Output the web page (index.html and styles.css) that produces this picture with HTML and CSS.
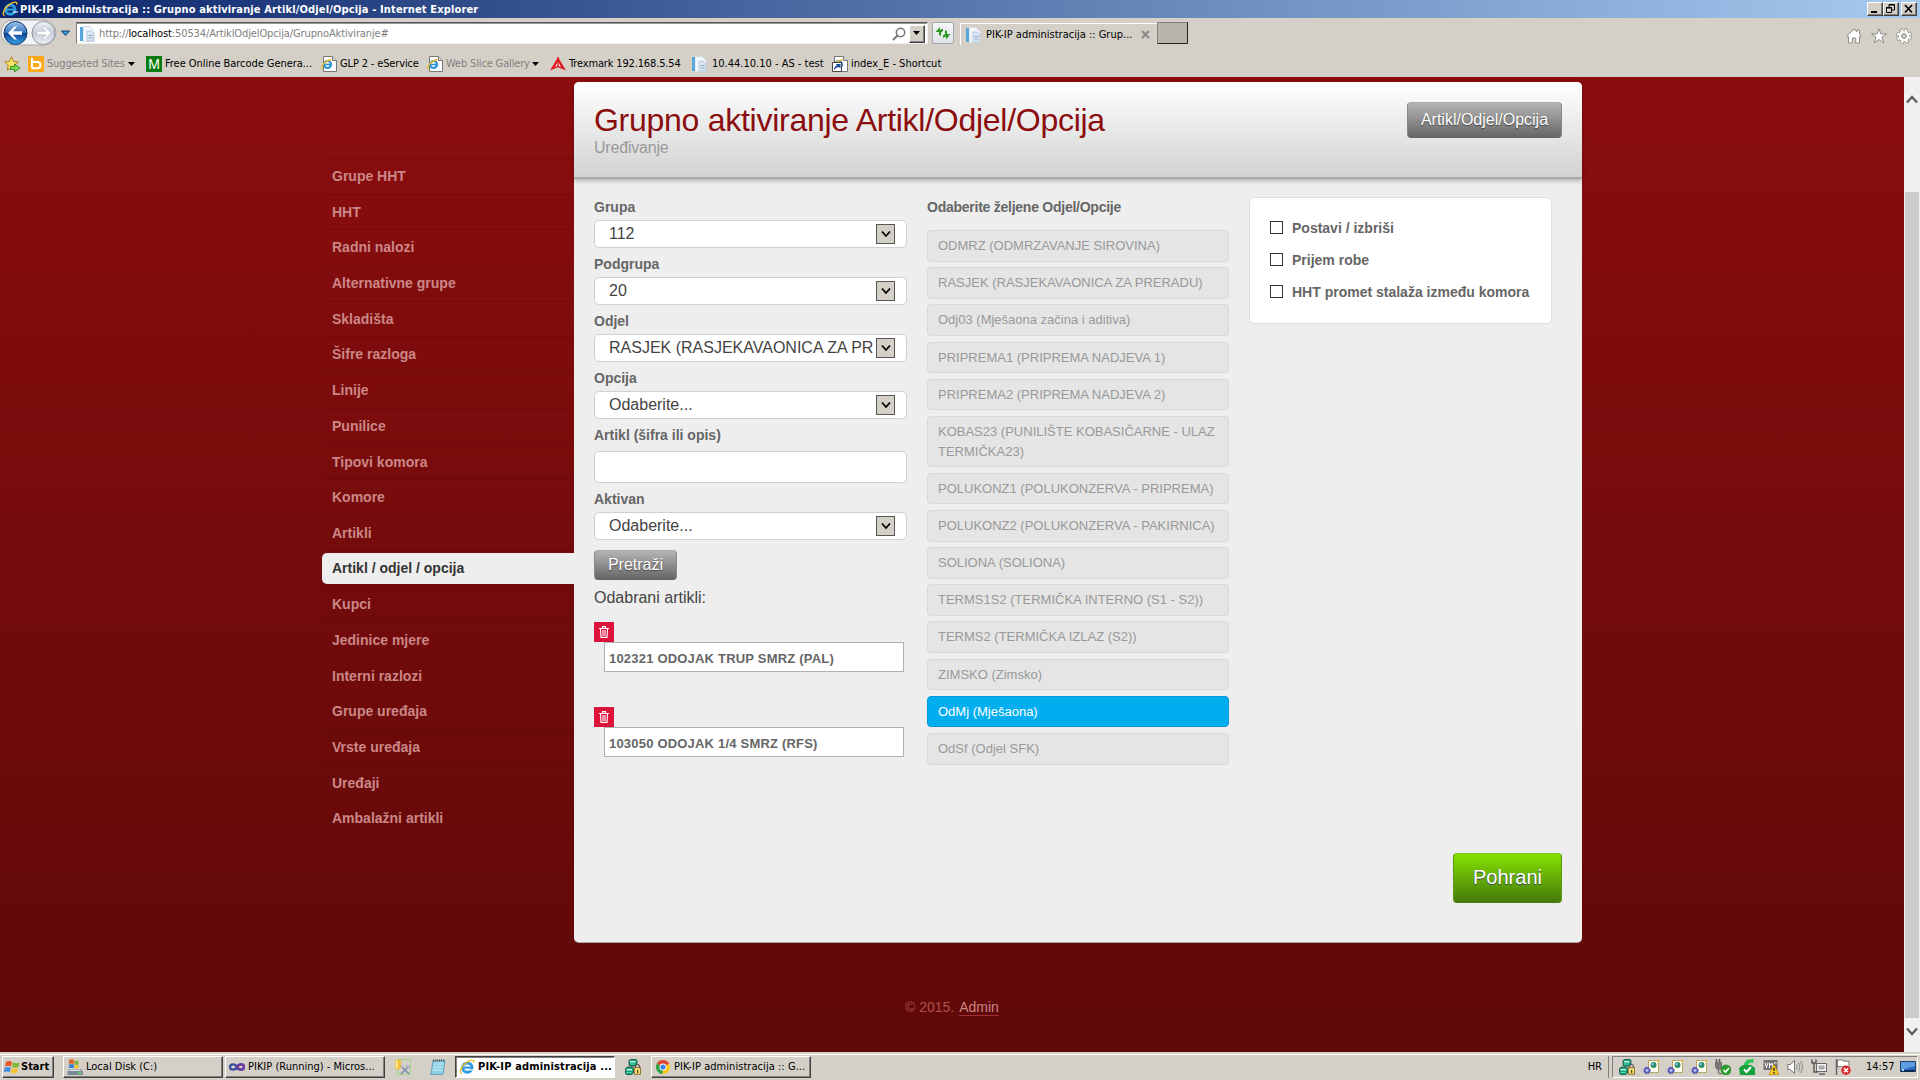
FILE: index.html
```html
<!DOCTYPE html>
<html lang="hr">
<head>
<meta charset="utf-8">
<title>PIK-IP administracija :: Grupno aktiviranje Artikl/Odjel/Opcija</title>
<link rel="stylesheet" href="styles.css">
</head>
<body>
<svg class="defs" width="0" height="0">
  <defs>
    <linearGradient id="g-back" x1="0" y1="0" x2="0" y2="1"><stop offset="0" stop-color="#9cc4ea"/><stop offset=".48" stop-color="#3a78c0"/><stop offset=".52" stop-color="#0d4596"/><stop offset="1" stop-color="#38a4e8"/></linearGradient>
    <linearGradient id="g-fwd" x1="0" y1="0" x2="0" y2="1"><stop offset="0" stop-color="#eef2f6"/><stop offset=".5" stop-color="#c4cdd8"/><stop offset="1" stop-color="#edf1f5"/></linearGradient>
    <symbol id="ie" viewBox="0 0 16 16"><circle cx="8.3" cy="8.6" r="4.7" fill="none" stroke="#2e9be0" stroke-width="3"/><path d="M4 8.6h9.5" stroke="#2e9be0" stroke-width="2.2"/><path d="M11 10h5v2h-5z" fill="#fff" opacity=".55"/><path d="M2.5 14.8C-.5 13 2.8 6.500 7.500 3.400S15.500 .3 14.600 3.500" fill="none" stroke="#f3bf2c" stroke-width="1.400"/></symbol>
    <symbol id="page" viewBox="0 0 16 16"><path d="M3 .5h7l4 4v11H3z" fill="#f3f7fc" stroke="#d3dce8"/><path d="M0 1h3v14H0z" fill="#58a7dc"/><path d="M7 5h4l3 3v7H7z" fill="#dbe5f1" stroke="#b9c9dc"/><path d="M8.500 9.500h4M8.500 12h4" stroke="#8fa9c6"/></symbol>
    <symbol id="iepage" viewBox="0 0 16 16"><path d="M2.500 .5h9l4 4v11h-13z" fill="#fff" stroke="#777"/><path d="M11.500 .5v4h4" fill="#ddd" stroke="#777"/><circle cx="6.500" cy="8.500" r="3.500" fill="none" stroke="#2b93d6" stroke-width="2.200"/><path d="M4 8.500h6" stroke="#2b93d6" stroke-width="1.600"/><path d="M1.500 13C-.5 11 3 5 10.500 3.500" fill="none" stroke="#f0b92b" stroke-width="1.300"/></symbol>
    <symbol id="servers" viewBox="0 0 16 16"><path d="M4 1.500l2-1h5l1 1v4l-2 1.500H5L4 6z" fill="#17a07c" stroke="#17463f" stroke-width=".8"/><path d="M.5 9.500l2-1.500h5l1 1.500v4.500l-2 1.500H1.500l-1-1z" fill="#17a07c" stroke="#17463f" stroke-width=".8"/><path d="M5 2h5.500v1.500H5zM1.500 10h5.500v1.500H1.500z" fill="#b2fbe0"/><path d="M5 5h5M1.500 13.500h5" stroke="#4be0ae"/><path d="M10.500 9V7.500a2 2 0 0 1 4 0V9" fill="none" stroke="#555" stroke-width="1.200"/><path d="M9.200 8.700h6.400v6.500H9.200z" fill="#f7dd7a" stroke="#6b5310" stroke-width=".8"/><path d="M12 11h1.200v3H12z" fill="#5d4607"/></symbol>
    <symbol id="gearpage" viewBox="0 0 16 16"><path d="M5.500 1.500h10v12h-10z" fill="#fffef0" stroke="#b9a76a"/><circle cx="10.500" cy="6" r="3" fill="#2d8f68"/><circle cx="9.700" cy="5.300" r="1.300" fill="#7cb8e8"/><path d="M13 1h3v3z" fill="#efaa22"/><circle cx="4" cy="11.500" r="2.700" fill="#8b90dc" stroke="#4a4fae" stroke-width="1.900" stroke-dasharray="1.600 .5"/><circle cx="4" cy="11.500" r="1" fill="#c9cdf8"/></symbol>
    <symbol id="trash" viewBox="0 0 10 12"><path d="M0 2.500h10M3.500 2V.6h3V2" fill="none" stroke="#fff" stroke-width="1.100"/><path d="M1.500 3l.5 8.400h6L8.500 3M4 4v6M6 4v6" fill="none" stroke="#fff" stroke-width="1.100"/></symbol>
    <symbol id="chev" viewBox="0 0 10 8"><path d="M1 1.500l4 4.500 4-4.500" fill="none" stroke="#000" stroke-width="1.800"/></symbol>
  </defs>
</svg>

<header class="titlebar">
  <svg width="16" height="16"><use href="#ie"/></svg>
  <span class="titlebar-text">PIK-IP administracija :: Grupno aktiviranje Artikl/Odjel/Opcija - Internet Explorer</span>
  <div class="winbtns">
    <span class="winbtn"><svg width="12" height="10"><path d="M2 8h6" stroke="#000" stroke-width="2"/></svg></span>
    <span class="winbtn"><svg width="12" height="10"><path d="M4 3V.5h5.500V6H7M4 1h6" fill="none" stroke="#000"/><path d="M1.500 3.500h5v5h-5zM1 4h6" fill="none" stroke="#000"/></svg></span>
    <span class="winbtn winbtn-close"><svg width="12" height="10"><path d="M2 1l7 7.500M9 1L2 8.500" stroke="#000" stroke-width="1.700"/></svg></span>
  </div>
</header>

<div class="navrow">
  <svg class="navbtns" width="76" height="30">
    <rect x="1" y="2" width="55" height="25" rx="12.500" fill="#f2f3f4" stroke="#aaa"/>
    <circle cx="15.500" cy="15" r="11.500" fill="url(#g-back)" stroke="#12376e"/>
    <path d="M8 15l6.500-6.500h2.500L13 13.300h9v3.400h-9l4 4.800h-2.500z" fill="#fff"/>
    <circle cx="43.500" cy="15" r="11.500" fill="url(#g-fwd)" stroke="#8e959e"/>
    <path d="M51 15l-6.500-6.500h-2.500l4 4.800h-9v3.400h9l-4 4.800h2.500z" fill="#fff" stroke="#b8bfc8" stroke-width=".6"/>
    <path d="M61.500 13h8l-4 4.500z" fill="#3aa3d8" stroke="#123c66"/>
  </svg>
  <div class="address">
    <svg width="16" height="16"><use href="#page"/></svg>
    <span class="url">http://<b>localhost</b>:50534/ArtiklOdjelOpcija/GrupnoAktiviranje#</span>
    <svg class="search" width="14" height="14"><circle cx="8.500" cy="5.500" r="4.200" fill="none" stroke="#777" stroke-width="1.500"/><path d="M5.500 8.500L1 13" stroke="#777" stroke-width="2"/></svg>
    <span class="dropbtn"><svg width="8" height="5"><path d="M0 0h7L3.500 4z"/></svg></span>
  </div>
  <span class="refresh"><svg width="16" height="14"><path d="M.5 6L5 1v3l3-1.500V5L6 6.500v3H4V6z" fill="#2f9a24"/><path d="M15.500 8L11 13.500v-3L8 12V9.500L10 8V4.500h2V8z" fill="#2f9a24"/></svg></span>
  <div class="tab">
    <svg width="16" height="16"><use href="#page"/></svg>
    <span class="tab-text">PIK-IP administracija :: Grup...</span>
    <svg width="9" height="9"><path d="M1 1l7 7M8 1L1 8" stroke="#888" stroke-width="2"/></svg>
  </div>
  <span class="newtab"></span>
  <div class="tools">
    <svg width="16" height="16"><path d="M.7 8L8 1l3 2.800V2h2.500v4L15.300 8l-1 1.200-.8-.7V15H9.700v-5H6.300v5H2.500V8.500l-.8.700z" fill="#fff" stroke="#8a8a86"/></svg>
    <svg width="16" height="16"><path d="M8 .8l1.900 5.100h5.500l-4.400 3.300 1.700 5.600L8 11.500l-4.700 3.300L5 9.200.6 5.900h5.500z" fill="#fff" stroke="#8a8a86"/></svg>
    <svg width="16" height="16"><circle cx="8" cy="8" r="6.300" fill="none" stroke="#8a8a86" stroke-width="3.300" stroke-dasharray="3.100 1.850"/><circle cx="8" cy="8" r="5" fill="none" stroke="#8a8a86" stroke-width="2"/><circle cx="8" cy="8" r="6" fill="none" stroke="#fff" stroke-width="2.400" stroke-dasharray="2.100 2.612" stroke-dashoffset="-.5"/><circle cx="8" cy="8" r="4" fill="none" stroke="#fff" stroke-width="2.600"/><circle cx="8" cy="8" r="2.300" fill="#d4d0c8" stroke="#8a8a86"/></svg>
  </div>
</div>

<div class="favrow">
  <svg class="fav-star" width="17" height="16"><path d="M7.500 .8l2 4.700 5 .3-3.800 3.300 1.200 5L7.500 11.500l-4.300 2.600 1.100-5L.6 5.800l4.900-.3z" fill="#fbe36a" stroke="#b5841a"/><path d="M6.500 10.500h4V8l5.500 4-5.500 4v-2.500h-4z" fill="#7ed957" stroke="#1c7f17" stroke-width=".8"/></svg>
  <span class="fav fav-sites"><svg width="16" height="16"><path d="M0 0h16v16H0z" fill="#fba919"/><path d="M4 2v10.500" stroke="#fff" stroke-width="2"/><path d="M5 6h4q3.500 0 3.500 3.200T9 12.300H4" fill="none" stroke="#fff" stroke-width="2"/></svg><i class="dim">Suggested Sites</i><svg class="caret" width="7" height="4"><path d="M0 0h7L3.500 4z"/></svg></span>
  <span class="fav fav-barcode"><b class="m-icon">M</b><i>Free Online Barcode Genera...</i></span>
  <span class="fav fav-glp"><svg width="16" height="16"><use href="#iepage"/></svg><i>GLP 2 - eService</i></span>
  <span class="fav fav-slice"><svg width="16" height="16"><use href="#iepage"/></svg><i class="dim">Web Slice Gallery</i><svg class="caret" width="7" height="4"><path d="M0 0h7L3.500 4z"/></svg></span>
  <span class="fav fav-trex"><svg width="16" height="16"><path d="M8 1l8 13.500-8-3.200-8 3.200z" fill="#e01b22"/><path d="M8 5l2.800 6L8 9.500 5.200 11z" fill="#fff"/><path d="M8 1v9" stroke="#e01b22" stroke-width="1.500"/></svg><i>Trexmark 192.168.5.54</i></span>
  <span class="fav fav-as"><svg width="16" height="16"><use href="#page"/></svg><i>10.44.10.10 - AS - test</i></span>
  <span class="fav fav-index"><svg width="16" height="16"><use href="#iepage"/><path d="M.5 6.500h9v9h-9z" fill="#fff" stroke="#444"/><path d="M2 14q0-4 3-4.500L4 8h4.500v4.500L7 11q-3 0-5 3z" fill="#174aa0"/></svg><i>index_E - Shortcut</i></span>
</div>

<div class="viewport">
  <nav class="sidebar">
    <div class="nav-item"><a>Grupe HHT</a></div>
    <div class="nav-item"><a>HHT</a></div>
    <div class="nav-item"><a>Radni nalozi</a></div>
    <div class="nav-item"><a>Alternativne grupe</a></div>
    <div class="nav-item"><a>Skladišta</a></div>
    <div class="nav-item"><a>Šifre razloga</a></div>
    <div class="nav-item"><a>Linije</a></div>
    <div class="nav-item"><a>Punilice</a></div>
    <div class="nav-item"><a>Tipovi komora</a></div>
    <div class="nav-item"><a>Komore</a></div>
    <div class="nav-item"><a>Artikli</a></div>
    <div class="nav-item"><a class="active">Artikl / odjel / opcija</a></div>
    <div class="nav-item"><a>Kupci</a></div>
    <div class="nav-item"><a>Jedinice mjere</a></div>
    <div class="nav-item"><a>Interni razlozi</a></div>
    <div class="nav-item"><a>Grupe uređaja</a></div>
    <div class="nav-item"><a>Vrste uređaja</a></div>
    <div class="nav-item"><a>Uređaji</a></div>
    <div class="nav-item nav-last"><a>Ambalažni artikli</a></div>
  </nav>

  <div class="content">
    <main class="panel">
      <div class="panel-head">
        <div>
          <h1>Grupno aktiviranje Artikl/Odjel/Opcija</h1>
          <p class="subtitle">Uređivanje</p>
        </div>
        <a class="btn btn-head">Artikl/Odjel/Opcija</a>
      </div>
      <div class="panel-body">
        <section class="filters">
          <label>Grupa</label>
          <div class="select"><span>112</span><b class="arrow"><svg width="10" height="8"><use href="#chev"/></svg></b></div>
          <label>Podgrupa</label>
          <div class="select"><span>20</span><b class="arrow"><svg width="10" height="8"><use href="#chev"/></svg></b></div>
          <label>Odjel</label>
          <div class="select"><span>RASJEK (RASJEKAVAONICA ZA PR</span><b class="arrow"><svg width="10" height="8"><use href="#chev"/></svg></b></div>
          <label>Opcija</label>
          <div class="select"><span>Odaberite...</span><b class="arrow"><svg width="10" height="8"><use href="#chev"/></svg></b></div>
          <label>Artikl (šifra ili opis)</label>
          <div class="input"></div>
          <label>Aktivan</label>
          <div class="select"><span>Odaberite...</span><b class="arrow"><svg width="10" height="8"><use href="#chev"/></svg></b></div>
          <a class="btn btn-search">Pretraži</a>
          <p class="chosen">Odabrani artikli:</p>
          <div class="article"><span class="del"><svg width="10" height="12"><use href="#trash"/></svg></span><div class="article-name">102321 ODOJAK TRUP SMRZ (PAL)</div></div>
          <div class="article"><span class="del"><svg width="10" height="12"><use href="#trash"/></svg></span><div class="article-name">103050 ODOJAK 1/4 SMRZ (RFS)</div></div>
        </section>
        <section class="options">
          <label>Odaberite željene Odjel/Opcije</label>
          <div class="option-list">
            <div class="option">ODMRZ (ODMRZAVANJE SIROVINA)</div>
            <div class="option">RASJEK (RASJEKAVAONICA ZA PRERADU)</div>
            <div class="option">Odj03 (Mješaona začina i aditiva)</div>
            <div class="option">PRIPREMA1 (PRIPREMA NADJEVA 1)</div>
            <div class="option">PRIPREMA2 (PRIPREMA NADJEVA 2)</div>
            <div class="option">KOBAS23 (PUNILIŠTE KOBASIČARNE - ULAZ<br>TERMIČKA23)</div>
            <div class="option">POLUKONZ1 (POLUKONZERVA - PRIPREMA)</div>
            <div class="option">POLUKONZ2 (POLUKONZERVA - PAKIRNICA)</div>
            <div class="option">SOLIONA (SOLIONA)</div>
            <div class="option">TERMS1S2 (TERMIČKA INTERNO (S1 - S2))</div>
            <div class="option">TERMS2 (TERMIČKA IZLAZ (S2))</div>
            <div class="option">ZIMSKO (Zimsko)</div>
            <div class="option selected">OdMj (Mješaona)</div>
            <div class="option">OdSf (Odjel SFK)</div>
          </div>
        </section>
        <section class="actions">
          <div class="checks">
            <div class="check"><i></i>Postavi / izbriši</div>
            <div class="check"><i></i>Prijem robe</div>
            <div class="check"><i></i>HHT promet stalaža između komora</div>
          </div>
          <a class="btn-save">Pohrani</a>
        </section>
      </div>
    </main>
    <footer class="foot">© 2015. <a>Admin</a></footer>
  </div>

  <div class="scrollbar">
    <svg width="16" height="10"><path d="M3 8.500l5-5.500 5 5.500" fill="none" stroke="#606060" stroke-width="2.400"/></svg>
    <div class="thumb"></div>
    <svg width="16" height="10"><path d="M3 1.500L8 7l5-5.500" fill="none" stroke="#606060" stroke-width="2.400"/></svg>
  </div>
</div>

<div class="taskbar">
  <span class="task start"><svg width="16" height="16"><path d="M2 3q3-2 6 0L7 7.500q-3-1.500-6 0z" fill="#e8562a"/><path d="M9 3.300q3 1.700 6.500 0l-1 4.700q-3 1.500-6.500 0z" fill="#7cb936"/><path d="M.8 8.800q3-1.800 6 0l-1 4.500q-3-1.800-6 0z" fill="#3e8fdc"/><path d="M7.800 9q3 1.600 6.300 0l-1 4.500q-3.300 1.600-6.300 0z" fill="#f6c12c"/></svg>Start</span>
  <span class="task t-disk"><svg width="16" height="16"><path d="M2 1q3-1.500 5 0v4q-2-1-5 0z" fill="#e2632a"/><path d="M7.500 1.500q2 .8 4 0v4q-2 .8-4 0z" fill="#78b43a"/><path d="M2 5.500q3-1 5 0v3.500H2z" fill="#3c86d0"/><path d="M7.500 6q2 .6 4 0v3.500h-4z" fill="#f2c02f"/><path d="M2.500 10h11l2.500 3v3H.500v-3z" fill="#7c8994"/><path d="M3 10.500h10l1 1.500H2z" fill="#d7dee4"/><path d="M11 14h3" stroke="#5f5" stroke-width="1.200"/></svg>Local Disk (C:)</span>
  <span class="task t-vs"><svg width="16" height="16"><path d="M8 8C6 4.500 1 4.500 1 8s5 3.500 7 0 7-3.500 7 0-5 3.500-7 0" fill="none" stroke="#3c51a0" stroke-width="2.400"/><path d="M8 8c2-3.500 7-3.500 7 0s-5 3.500-7 0" fill="none" stroke="#6c3a9c" stroke-width="2.400"/></svg>PIKIP (Running) - Micros...</span>
  <svg class="ql-db" width="16" height="16"><path d="M2.500 .5h13v15h-13z" fill="none" stroke="#6ddf3c" stroke-dasharray="1 1"/><path d="M0 1.500q3-2 6 0v8q-3 2-6 0z" fill="#f2c141"/><path d="M1 2h1.500v7H1z" fill="#fff3b8"/><path d="M6 15l8-8M7 8l7 7" stroke="#7c8ba8" stroke-width="1.600"/><path d="M11 6.500l4 2.500M6 6.500l2 2.500" stroke="#a9b6cc" stroke-width="2.500"/></svg>
  <svg class="ql-note" width="16" height="16"><path d="M3 1.500h12L13 15.500H.800z" fill="#8dd0e4" stroke="#5b93a8" stroke-width=".8"/><path d="M3.500 5h10M3 8h10M2.500 11h10" stroke="#c9edf6"/><path d="M3 1.500h12" stroke="#555" stroke-dasharray="1 1" stroke-width="2"/></svg>
  <span class="task t-ie"><svg width="16" height="16"><use href="#ie"/></svg>PIK-IP administracija ...</span>
  <svg class="ql-srv" width="16" height="16"><use href="#servers"/></svg>
  <span class="task t-chrome"><svg width="16" height="16"><circle cx="8" cy="8" r="7" fill="#fbc817"/><path d="M8 8L1.900 4.500A7 7 0 0 1 14.100 4.500z" fill="#dd4436"/><path d="M8 8L1.900 4.500A7 7 0 0 0 7.500 15z" fill="#2ea24c"/><path d="M8 4.500h6.300L8 8z" fill="#dd4436"/><circle cx="8" cy="8" r="3.500" fill="#fff"/><circle cx="8" cy="8" r="2.600" fill="#3d7fe0"/></svg>PIK-IP administracija :: G...</span>
  <span class="lang">HR</span>
  <div class="tray">
    <svg width="16" height="16"><use href="#servers"/></svg>
    <svg width="16" height="16"><use href="#gearpage"/></svg>
    <svg width="16" height="16"><use href="#gearpage"/></svg>
    <svg width="16" height="16"><use href="#gearpage"/></svg>
    <svg width="16" height="16"><path d="M1.500 0v3M4.500 0v3" stroke="#555" stroke-width="1.500"/><path d="M0 3h7v5q-1 3-3.500 3T0 8z" fill="#777"/><path d="M3.500 10v4q2 1.500 4 0" fill="none" stroke="#777" stroke-width="1.500"/><circle cx="11" cy="11" r="5" fill="#2aa02a" stroke="#11701a" stroke-width=".6"/><path d="M8.500 11l2 2 3.500-4" fill="none" stroke="#fff" stroke-width="1.600"/></svg>
    <svg width="16" height="16"><path d="M0 9l4-3h8l4 3v7H1z" fill="#16a23b"/><path d="M5 6q1-6 6-5.500L15 0l-1 4q-4-1.500-5 2z" fill="#26c651"/><path d="M5 10.500L7.500 13 12 8" fill="none" stroke="#fff" stroke-width="2"/></svg>
    <svg width="16" height="16"><path d="M.5 1h14v10H.500z" fill="#727272"/><path d="M2 3.500l1.500 5L5 3.500M6.500 9V4l1.500 2 1.500-2v5M11 4h2.500" fill="none" stroke="#fff"/><path d="M11 5.500L16 15.500H6z" fill="#fcd01e" stroke="#b8860b" stroke-width=".7"/><path d="M11 9v3M11 13v1.500" stroke="#222" stroke-width="1.400"/></svg>
    <svg width="16" height="16"><path d="M.8 5.500h2.500L7.500 1.500v13l-4.200-4H.8z" fill="#fff" stroke="#777"/><path d="M9.500 5.500q1.500 2.500 0 5M11.500 3.500q3 4.500 0 9M13.500 2q4 6 0 12" fill="none" stroke="#888"/></svg>
    <svg width="16" height="16"><path d="M5.500 4.500h10v8h-10z" fill="#f4f4f0" stroke="#666"/><path d="M7.500 6.500h6v4h-6z" fill="#aaa"/><path d="M8 15h6" stroke="#666" stroke-width="1.500"/><path d="M1 .5v3.500h4V.500M3 4v9h4" fill="none" stroke="#555" stroke-width="1.400"/></svg>
    <svg width="16" height="16"><path d="M1.500 0v16" stroke="#666" stroke-width="1.500"/><path d="M2.500 1.500q3-1.500 5.500 0t6 .5v6.500q-3 1-6-.5t-5.500 0z" fill="#fff" stroke="#777"/><circle cx="11" cy="11.200" r="4.700" fill="#dc2a2a"/><path d="M9 9.200l4 4M13 9.200l-4 4" stroke="#fff" stroke-width="1.600"/></svg>
    <span class="clock">14:57</span>
    <svg width="16" height="12"><path d="M.5 .5h15v10H.500z" fill="#2b69bd" stroke="#1f4271"/><path d="M1 1h14v4L1 9z" fill="#5e9de0"/><path d="M1 10h14" stroke="#0d2a54" stroke-width="2"/><path d="M2 8h2v2H2z" fill="#9df"/></svg>
  </div>
</div>
</body>
</html>
```
FILE: styles.css
```css
* { box-sizing: border-box; }
body {
  margin: 0;
  width: 1920px;
  height: 1080px;
  overflow: hidden;
  display: flex;
  flex-direction: column;
  background: #d4d0c8;
  color: #000;
  font: 11px/14px "DejaVu Sans Condensed", "DejaVu Sans", sans-serif;
  white-space: nowrap;
}
svg { display: block; flex: none; }
.defs { position: absolute; }

/* Browser chrome */
.titlebar {
  height: 18px;
  flex: none;
  display: flex;
  align-items: center;
  padding: 0 3px 0 2px;
  background: linear-gradient(90deg, #0a246a, #a6caf0);
  color: #fff;
  font-weight: bold;
}
.titlebar-text { margin-left: 2px; padding-top: 1px; letter-spacing: .14px; }
.winbtns { margin-left: auto; display: flex; }
.winbtn {
  width: 16px;
  height: 14px;
  padding: 1px;
  background: #d4d0c8;
  border: 1px solid;
  border-color: #fff #404040 #404040 #fff;
  box-shadow: inset -1px -1px #808080;
}
.winbtn-close { margin-left: 2px; }

.navrow { height: 30px; flex: none; display: flex; align-items: flex-start; }
.navbtns { width: 76px; }
.address {
  width: 852px;
  height: 22px;
  margin-top: 4px;
  padding: 1px 2px 0 3px;
  display: flex;
  align-items: center;
  background: #fff;
  border: 1px solid;
  border-color: #555 #eee #eee #808080;
  box-shadow: inset 0 1px #999;
}
.url { margin-left: 3px; padding-top: 1px; color: #808080; letter-spacing: -.12px; }
.url b { font-weight: normal; color: #000; }
.search { margin-left: auto; }
.dropbtn {
  width: 16px;
  height: 18px;
  margin-left: 3px;
  display: flex;
  align-items: center;
  justify-content: center;
  background: #d4d0c8;
  border: 1px solid;
  border-color: #fff #404040 #404040 #fff;
  box-shadow: inset -1px -1px #808080;
}
.refresh {
  width: 22px;
  height: 22px;
  margin: 4px 0 0 4px;
  display: flex;
  align-items: center;
  justify-content: center;
  background: linear-gradient(#f4f5f7, #dfe3e8);
  border: 1px solid #a4a8ae;
  border-radius: 2px;
}
.tab {
  width: 197px;
  height: 22px;
  margin: 5px 0 0 6px;
  padding-left: 5px;
  display: flex;
  align-items: center;
  border-top: 1px solid #fff;
  border-left: 1px solid #fff;
}
.tab-text { width: 154px; margin: 0 1px 0 4px; letter-spacing: 0; }
.newtab {
  width: 31px;
  height: 22px;
  margin-top: 4px;
  background: #b8b4ac;
  border: 1px solid;
  border-color: #808080 #222 #222 #808080;
}
.tools { margin: 10px 8px 0 auto; display: flex; gap: 9px; }

.favrow { height: 29px; flex: none; display: flex; align-items: center; padding: 2px 0 0 4px; }
.fav-star { margin-right: 7px; }
.fav { display: flex; align-items: center; }
.fav i { font-style: normal; margin-left: 3px; letter-spacing: -.15px; }
.fav .dim { color: #808080; }
.caret { margin-left: auto; }
.fav-sites { width: 107px; margin-right: 11px; }
.fav-barcode { width: 175px; }
.fav-barcode i { letter-spacing: -.05px; }
.fav-glp { width: 106px; }
.fav-slice { width: 112px; margin-right: 11px; }
.fav-trex { width: 142px; }
.fav-as { width: 140px; }
.fav-as i { margin-left: 4px; letter-spacing: 0; }
.fav-index i { letter-spacing: 0; }
.m-icon {
  width: 16px;
  height: 16px;
  background: #0b7d0e;
  color: #fff;
  font: 14px/16px "Liberation Sans", Arial, sans-serif;
  text-align: center;
}

/* Page */
.viewport {
  height: 975px;
  flex: none;
  display: flex;
  padding-left: 322px;
  background: linear-gradient(#8b0d0e, #5e0908);
  font-family: "Liberation Sans", Arial, sans-serif;
}
.sidebar { width: 252px; padding-top: 81px; }
.nav-item {
  height: 35.7px;
  padding-top: 1px;
  border-top: 1px solid rgba(60, 0, 0, .2);
}
.nav-last { border-bottom: 1px solid rgba(60, 0, 0, .2); }
.nav-item a {
  display: block;
  height: 31px;
  padding-left: 10px;
  border-radius: 5px 0 0 5px;
  color: #cb8787;
  font-size: 14px;
  font-weight: bold;
  line-height: 33px;
}
.nav-item .active { background: #eee; color: #333; line-height: 31px; }

.content { width: 1008px; padding-top: 5px; }
.panel {
  height: 861px;
  background: #eee;
  border-radius: 5px;
  border-bottom: 1px solid #aaa;
}
.panel-head {
  height: 97px;
  padding: 20px 20px 0;
  display: flex;
  justify-content: space-between;
  align-items: flex-start;
  border-radius: 5px 5px 0 0;
  border-bottom: 2px solid #aaa;
  background: linear-gradient(#fff, #d2d2d2);
  box-shadow: 0 2px 4px rgba(0, 0, 0, .25);
}
h1 { margin: 0; color: #8b0d0e; font-size: 32px; font-weight: normal; line-height: 36px; letter-spacing: -.27px; }
.subtitle { margin: 0; color: #999; font-size: 16px; line-height: 20px; letter-spacing: -.2px; }
.btn {
  display: block;
  border: 1px solid;
  border-color: #aaa #888 #666 #888;
  border-radius: 4px;
  background: linear-gradient(#b5b5b5, #666);
  color: #fff;
  font-size: 16px;
  text-align: center;
  text-shadow: 0 1px 1px #444;
}
.btn-head { width: 155px; height: 36px; line-height: 34px; }
.panel-body { height: 763px; padding: 18px 20px 0; display: flex; }
label { display: block; color: #666; font-size: 14px; font-weight: bold; line-height: 20px; }

.filters { width: 313px; margin-right: 20px; }
.select {
  height: 28px;
  margin: 3px 0 6px;
  padding: 0 11px 0 14px;
  display: flex;
  align-items: center;
  justify-content: space-between;
  background: #fff;
  border: 1px solid #d0d0d0;
  border-radius: 5px;
  color: #444;
  font-size: 16px;
}
.select span { width: 267px; line-height: 24px; }
.arrow {
  width: 19px;
  height: 20px;
  flex: none;
  display: flex;
  align-items: center;
  justify-content: center;
  background: #d4d0c8;
  border: 1px solid #555;
  position: relative;
}
.input { height: 32px; margin: 6px 0; background: #fff; border: 1px solid #d0d0d0; border-radius: 5px; }
.btn-search { width: 83px; height: 30px; margin-top: 10px; line-height: 28px; }
.chosen { margin: 8px 0 14px; color: #444; font-size: 16px; line-height: 20px; }
.article { height: 85px; }
.del {
  width: 20px;
  height: 20px;
  display: flex;
  align-items: center;
  justify-content: center;
  background: #dc143c;
}
.article-name {
  width: 300px;
  height: 30px;
  margin-left: 10px;
  padding-left: 4px;
  background: #fff;
  border: 1px solid #b0b0b0;
  color: #666;
  font-size: 13px;
  font-weight: bold;
  line-height: 31px;
  letter-spacing: .2px;
}

.options { width: 302px; margin-right: 20px; }
.options label { letter-spacing: -.25px; }
.option-list { margin-top: 13px; display: flex; flex-direction: column; gap: 5.6px; }
.option {
  padding: 5px 10px;
  background: #e5e5e5;
  border: 1px solid #d9d9d9;
  border-radius: 4px;
  color: #999;
  font-size: 13px;
  line-height: 19.6px;
}
.selected { background: #00adef; border-color: #0596d4; color: #fff; }

.actions { flex: 1; display: flex; flex-direction: column; }
.checks {
  width: 303px;
  height: 127px;
  padding: 20px 0 0 20px;
  background: #fff;
  border: 1px solid #e0e0e0;
  border-radius: 5px;
}
.check { height: 32px; display: flex; align-items: center; padding-bottom: 12px; color: #666; font-size: 14px; font-weight: bold; line-height: 20px; }
.check i { width: 13px; height: 13px; margin: 0 9px 1px 0; background: #fff; border: 1px solid #333; }
.btn-save {
  width: 109px;
  height: 50px;
  margin: 529px 0 0 auto;
  border: 1px solid;
  border-color: #7ac50d #5a9a10 #4b7f10;
  border-radius: 4px;
  background: linear-gradient(#86e103, #457a0a);
  color: #fff;
  font-size: 20px;
  line-height: 46px;
  text-align: center;
  text-shadow: 0 1px 1px #345;
}
.foot { margin: 55px 0 0 331px; color: #b05050; font-size: 14px; line-height: 18px; }
.foot a { margin-left: 1px; color: #cb8787; border-bottom: 1px solid #a03030; }

.scrollbar {
  width: 16px;
  margin-left: auto;
  padding-top: 17px;
  background: #f0f0f0;
}
.thumb { height: 826px; margin: 88px 1px 9px; background: #cdcdcd; }

/* Taskbar */
.taskbar {
  height: 28px;
  flex: none;
  display: flex;
  align-items: center;
  padding: 2px 2px 0;
  background: #d4d0c8;
  box-shadow: inset 0 2px #d4d0c8, inset 0 3px #fff;
}
.task {
  height: 22px;
  padding-left: 3px;
  display: flex;
  align-items: center;
  gap: 3px;
  border: 1px solid;
  border-color: #fff #404040 #404040 #fff;
  box-shadow: inset -1px -1px #808080;
}
.start { width: 52px; padding-left: 1px; gap: 1px; margin-right: 9px; font-weight: bold; }
.t-disk { width: 160px; margin-right: 2px; }
.t-vs { width: 160px; }
.ql-db { margin-left: 10px; }
.ql-note { margin-left: 19px; }
.t-ie {
  width: 160px;
  margin-left: 9px;
  background: #fff;
  border-color: #404040 #fff #fff #404040;
  box-shadow: inset 1px 1px #808080;
  font-weight: bold;
  letter-spacing: .15px;
}
.ql-srv { margin: 0 10px; }
.t-chrome { width: 160px; letter-spacing: .05px; }
.lang { margin-left: auto; padding-right: 6px; margin-right: 3px; border-right: 1px solid #808080; line-height: 22px; }
.tray {
  width: 306px;
  height: 22px;
  padding-left: 6px;
  display: flex;
  align-items: center;
  gap: 8px;
  border: 1px solid;
  border-color: #808080 #fff #fff #808080;
}
.clock { width: 29px; margin: 0 -3px 0 7px; }
```
